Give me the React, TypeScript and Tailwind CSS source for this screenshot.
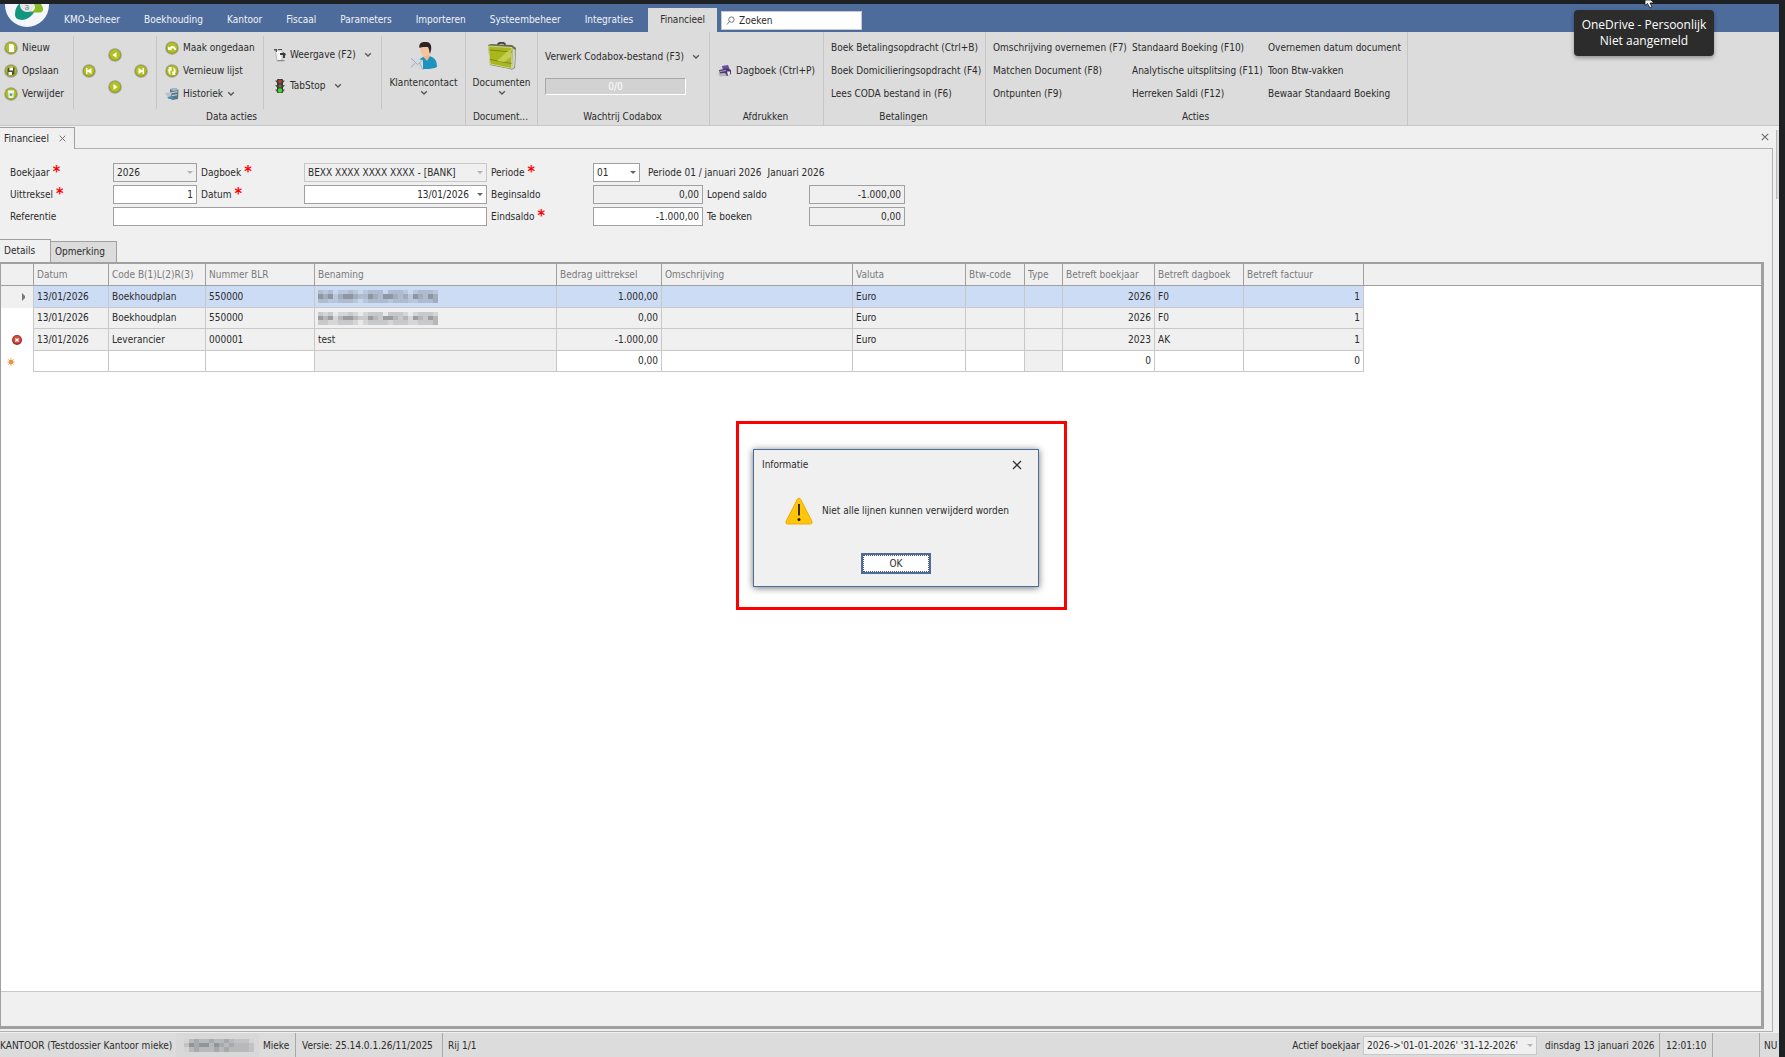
import { useState } from 'react';
import type { ReactNode } from 'react';
import clsx from 'clsx';

const MENU = [
  'KMO-beheer',
  'Boekhouding',
  'Kantoor',
  'Fiscaal',
  'Parameters',
  'Importeren',
  'Systeembeheer',
  'Integraties',
  'Financieel',
];

const ACTION_COLUMNS = [
  {
    width: 'w-[139px]',
    items: ['Omschrijving overnemen (F7)', 'Matchen Document (F8)', 'Ontpunten (F9)'],
  },
  {
    width: 'w-[136px]',
    items: ['Standaard Boeking (F10)', 'Analytische uitsplitsing (F11)', 'Herreken Saldi (F12)'],
  },
  {
    width: 'w-[136px]',
    items: ['Overnemen datum document', 'Toon Btw-vakken', 'Bewaar Standaard Boeking'],
  },
];

type Column = { title: string; width: string; right?: boolean };

const COLUMNS: Column[] = [
  { title: 'Datum', width: 'w-[75px]' },
  { title: 'Code B(1)L(2)R(3)', width: 'w-[97px]' },
  { title: 'Nummer BLR', width: 'w-[109px]' },
  { title: 'Benaming', width: 'w-[242px]' },
  { title: 'Bedrag uittreksel', width: 'w-[105px]', right: true },
  { title: 'Omschrijving', width: 'w-[191px]' },
  { title: 'Valuta', width: 'w-[113px]' },
  { title: 'Btw-code', width: 'w-[59px]' },
  { title: 'Type', width: 'w-[38px]' },
  { title: 'Betreft boekjaar', width: 'w-[92px]', right: true },
  { title: 'Betreft dagboek', width: 'w-[89px]' },
  { title: 'Betreft factuur', width: 'w-[120px]', right: true },
];

type Row = { state: 'current' | 'plain' | 'error' | 'new'; masked?: boolean; cells: string[] };

const ROWS: Row[] = [
  {
    state: 'current',
    masked: true,
    cells: ['13/01/2026', 'Boekhoudplan', '550000', '', '1.000,00', '', 'Euro', '', '', '2026', 'F0', '1'],
  },
  {
    state: 'plain',
    masked: true,
    cells: ['13/01/2026', 'Boekhoudplan', '550000', '', '0,00', '', 'Euro', '', '', '2026', 'F0', '1'],
  },
  {
    state: 'error',
    cells: ['13/01/2026', 'Leverancier', '000001', 'test', '-1.000,00', '', 'Euro', '', '', '2023', 'AK', '1'],
  },
  {
    state: 'new',
    cells: ['', '', '', '', '0,00', '', '', '', '', '0', '', '0'],
  },
];

/* ---------- icons ---------- */

function RoundIcon({ children }: { children: ReactNode }) {
  return (
    <svg viewBox="0 0 14 14" className="w-[14px] h-[14px] shrink-0" aria-hidden="true">
      <circle cx="7" cy="7" r="6.8" fill="#a3a39b" />
      <circle cx="7" cy="7" r="5.8" fill="#8f9c10" />
      <circle cx="7" cy="6.6" r="5.2" fill="#b3c01e" />
      {children}
    </svg>
  );
}

function Chevron() {
  return (
    <svg viewBox="0 0 8 6" className="w-2 h-[6px] shrink-0" fill="none" stroke="#555" strokeWidth="1.3" aria-hidden="true">
      <path d="M1.2 1.2 L4 4 L6.8 1.2" />
    </svg>
  );
}

function Cross({ className, color }: { className: string; color: string }) {
  return (
    <svg viewBox="0 0 10 10" className={className} stroke={color} strokeWidth="1.3" aria-hidden="true">
      <path d="M1 1 L9 9 M9 1 L1 9" />
    </svg>
  );
}

function Logo() {
  return (
    <svg viewBox="0 0 44 24" className="w-11 h-6" aria-hidden="true">
      <circle cx="22" cy="1" r="22" fill="#f4f6fb" />
      <path d="M10 10 C10 5 12 2 14 0 L16 0 C17 6 22 9 30 7 C26 14 20 17 14 15.500 C11 15 10 13 10 10 Z" fill="#12977f" />
      <path d="M24 8 C30 8 31 3 29 0 L36 0 C40 6 38 9 33 8.500 C30 8.300 28 9 24 8 Z" fill="#86bc25" />
      <circle cx="22" cy="1" r="7" fill="#e4e6ea" />
      <text x="22" y="6" textAnchor="middle" fontSize="8" fill="#7c8088">a</text>
    </svg>
  );
}

const NewIcon = () => (
  <RoundIcon>
    <path d="M5 3 h3.500 l1.500 1.500 v6.500 h-5 z" fill="#fff" />
  </RoundIcon>
);

const SaveIcon = () => (
  <RoundIcon>
    <path d="M3.500 4.500 L5 3.500 h5.500 v6 L9 11 h-5.500 z" fill="#4d4f3a" />
    <path d="M5.500 3.500 h3.500 v3 h-3.500 z M4.500 8 h3.500 v3 h-3.500 z" fill="#fff" />
  </RoundIcon>
);

const DeleteIcon = () => (
  <RoundIcon>
    <path d="M4 4 h6 l-.7 7 h-4.600 z" fill="#e9f1ee" />
    <path d="M4 3.500 h6 v1.200 h-6 z" fill="#fff" />
    <path d="M5.500 7 l1.500 -1 l1.500 1 l-.5 2 h-2 z" fill="#5fa79a" />
  </RoundIcon>
);

const UndoIcon = () => (
  <RoundIcon>
    <path d="M3 9 V5.500 L4.500 6.500 C6.500 4 10.500 4.300 11.300 9 H9.500 C9 7 7.200 7 6.200 8 L7 9 Z" fill="#fff" />
  </RoundIcon>
);

const RefreshIcon = () => (
  <RoundIcon>
    <path d="M6.500 3 L3.300 3.300 L4.200 4.300 C2.500 6.500 3.300 9.700 6 10.800 C4.900 8.900 5 7.200 5.900 6 L6.800 6.900 Z" fill="#fff" />
    <path d="M7.500 11 L10.700 10.700 L9.800 9.700 C11.500 7.500 10.700 4.300 8 3.200 C9.100 5.100 9 6.800 8.100 8 L7.200 7.100 Z" fill="#fff" />
  </RoundIcon>
);

const HistoryIcon = () => (
  <svg viewBox="0 0 14 14" className="w-[14px] h-[14px] shrink-0" aria-hidden="true">
    <path d="M5 2 L11 1 L13.500 3 L13 12 L7 13 L5 11 Z" fill="#5d7686" />
    <path d="M5 2 L11 1 L13.500 3 L8 4 Z" fill="#a9bcc6" />
    <path d="M7 5.500 L12.500 4.700 M7 8.500 L12 7.800" stroke="#cfdae0" />
    <path d="M0 6 L7 5 L6 10 L2 9 Z" fill="#b9c4ca" />
    <path d="M2 10 L8 9 L8 12 L4 12 Z" fill="#3d93b4" />
  </svg>
);

const ViewIcon = () => (
  <svg viewBox="0 0 12 14" className="w-3 h-[14px] shrink-0" aria-hidden="true">
    <path d="M1.500 2.500 L8 2 V12 L3 13 Z" fill="#f6f6f6" stroke="#a5a5a5" strokeWidth=".7" />
    <path d="M0 1 h3 v3 h-1 v-1.500 h-2 z M4 1 h4 v1 h-4 z" fill="#555" />
    <path d="M6 5 h3 v-1 l3 2 l-1 2 v2 h-2 v-3 h-3 z" fill="#3c3c3c" />
    <path d="M3 12 h7 l1 1.200 h-7 z" fill="#8a8a8a" />
  </svg>
);

const TrafficIcon = () => (
  <svg viewBox="0 0 12 16" className="w-3 h-4 shrink-0" aria-hidden="true">
    <path d="M1 2.500 H11 L9 5 H3 Z M1 7 H11 L9 9.500 H3 Z M1 11.500 H11 L9 14 H3 Z" fill="#555" />
    <rect x="3" y="1" width="6" height="14" rx="1" fill="#3a3a3a" />
    <circle cx="6" cy="3.500" r="1.900" fill="#b53a30" />
    <circle cx="6" cy="8" r="1.800" fill="#6f6a3a" />
    <circle cx="6" cy="12.500" r="2.200" fill="#35e026" />
  </svg>
);

const ContactIcon = () => (
  <svg viewBox="0 0 28 28" className="w-7 h-7" aria-hidden="true">
    <path d="M8 26 C7 18 10 15 17 14 C24 14 27 18 27 25 C22 27.500 13 27.500 8 26 Z" fill="#1d93bd" />
    <path d="M13 14.500 L17 19 L20 14 L18.500 12 H14 Z" fill="#f0b78e" />
    <ellipse cx="15.500" cy="8" rx="5" ry="6.500" fill="#f5c39c" />
    <path d="M9.500 6 C8.500 2 11 0 15 0 C20 -.5 22 3 21 8 L20 12 C19 10 19.500 7 18 5 C15 5 12 4.500 9.500 6 Z" fill="#2c2420" />
    <path d="M1 16 L13 18 V28 L1 25.500 Z" fill="#d4d9df" />
    <path d="M1 16 L7.500 22.500 L13 18 M1 25.500 L5.500 20.500 M13 28 L9.500 21" fill="none" stroke="#9fa6ae" strokeWidth=".8" />
  </svg>
);

const SuitcaseIcon = () => (
  <svg viewBox="0 0 30 28" className="w-[30px] h-7" aria-hidden="true">
    <path d="M11 3 C11 0 18 0 18 3" fill="none" stroke="#454545" strokeWidth="2" />
    <path d="M1 3 L4 2 L25 3 L29 6 L28 26 L25 27.500 L3 23 Z" fill="#6b6f45" />
    <path d="M1.500 4 L25 5.500 L24.500 26.500 L3 22 Z" fill="#a8b71c" stroke="#dfe3bd" strokeWidth=".8" />
    <path d="M2.500 8 L25 10 M3 17.500 L24.500 21.500" stroke="#7f8a1a" />
    <path d="M10 19 L22 8 L24 8.500 L24 15 L17 20 Z" fill="#cdd86a" opacity=".7" />
    <path d="M25.500 6 L28.500 8 L27.500 25.500 L25 27 Z" fill="#cfd3bd" />
  </svg>
);

const PrinterIcon = () => (
  <svg viewBox="0 0 14 12" className="w-[14px] h-3 shrink-0" aria-hidden="true">
    <path d="M4 1 L10 0 L12 5 L5 6 Z" fill="#6d4aa5" />
    <path d="M1 5 L9 3.500 L13 5 V9 L9 11 L2 9 Z" fill="#4a3c66" />
    <path d="M0 8.500 L7 8 L9 10.500 L2 11.500 Z" fill="#b9b4c4" />
    <path d="M9 6.500 h3 v3 l-2 1 z" fill="#ece9f2" />
    <path d="M2 6.500 L8 5.500" stroke="#c9bde0" strokeWidth=".8" />
  </svg>
);

const ErrorIcon = () => (
  <svg viewBox="0 0 10 10" className="w-[10px] h-[10px]" aria-label="Fout">
    <circle cx="5" cy="5" r="5" fill="#a02a22" />
    <circle cx="5" cy="4.600" r="4" fill="#cf4a3d" />
    <path d="M3.400 3.400 L6.600 6.600 M6.600 3.400 L3.400 6.600" stroke="#fff" strokeWidth="1.400" />
  </svg>
);

const NewRowIcon = () => (
  <svg viewBox="0 0 8 8" className="w-2 h-2" aria-hidden="true">
    <path d="M4 0 V8 M0 4 H8 M1.200 1.200 L6.800 6.800 M6.800 1.200 L1.200 6.800" stroke="#f5b678" strokeWidth="1" />
    <circle cx="4" cy="4" r="2.300" fill="#f0923c" />
  </svg>
);

const WarningIcon = () => (
  <svg viewBox="0 0 28 28" className="w-7 h-7 shrink-0" aria-hidden="true">
    <path d="M12.500 2 Q14 0 15.500 2 L27 24.500 Q27.500 27 25.500 27 H2.500 Q.5 27 1 24.500 Z" fill="#ffc60a" stroke="#efa80a" strokeLinejoin="round" />
    <path d="M14 7 V18.500" stroke="#1f1f1f" strokeWidth="1.800" />
    <circle cx="14" cy="22.500" r="1.500" fill="#1f1f1f" />
  </svg>
);

const MASK_TONES: Record<string, string> = {
  '0': 'opacity-5',
  '1': 'opacity-20',
  '2': 'opacity-30',
  '3': 'opacity-45',
  '4': 'opacity-65',
};

const MASK_NAME = ['212011210122202221012221', '434134432243244323143243', '221122210122221222112223'];
const MASK_STATUS = ['02322322321110', '14344243232221', '02322232322221'];

// Redacted value, drawn as coarse blocks
function Mask({ rows, className }: { rows: string[]; className: string }) {
  return (
    <span className={clsx('grid h-[13px]', className)}>
      {rows.map((row, y) => (
        <span key={y} className="flex">
          {row.split('').map((tone, x) => (
            <span key={x} className={clsx('flex-1 bg-[#6c7078]', MASK_TONES[tone])} />
          ))}
        </span>
      ))}
    </span>
  );
}

/* ---------- ribbon ---------- */

function RibbonGroup({ title, width, children }: { title: string; width: string; children: ReactNode }) {
  return (
    <section className={clsx('flex flex-col shrink-0 h-[93px] border-r border-[#c6c6c6]', width)}>
      <div className="flex flex-1">{children}</div>
      <h2 className="h-4 pr-[2px] leading-4 text-center">{title}</h2>
    </section>
  );
}

function RibbonButton({ icon, label, drop }: { icon?: ReactNode; label: string; drop?: 'near' | 'far' }) {
  return (
    <button className="flex items-center h-[23px] gap-1 whitespace-nowrap hover:bg-[#cdd5e3]">
      {icon}
      <span>{label}</span>
      {drop && (
        <span className={drop === 'far' ? 'pl-1' : ''}>
          <Chevron />
        </span>
      )}
    </button>
  );
}

function BigButton({ icon, label }: { icon: ReactNode; label: string }) {
  return (
    <button className="flex flex-1 flex-col items-center pt-[10px]">
      {icon}
      <span className="h-4 mt-1 leading-[18px]">{label}</span>
      <Chevron />
    </button>
  );
}

function NavButton({ label, d, className }: { label: string; d: string; className: string }) {
  return (
    <button aria-label={label} className={clsx('flex items-center justify-center', className)}>
      <RoundIcon>
        <path d={d} fill="#fff" />
      </RoundIcon>
    </button>
  );
}

function Ribbon() {
  return (
    <div className="flex h-[94px] bg-[#dcdcdc] border-b border-[#c8c8c8]">
      <RibbonGroup title="Data acties" width="w-[466px]">
        <div className="flex flex-col w-[74px] mt-1 pl-1 border-r border-[#c6c6c6]">
          <RibbonButton icon={<NewIcon />} label="Nieuw" />
          <RibbonButton icon={<SaveIcon />} label="Opslaan" />
          <RibbonButton icon={<DeleteIcon />} label="Verwijder" />
        </div>
        <div className="flex items-center justify-center w-[83px] mt-1 pb-1 border-r border-[#c6c6c6]">
          <div className="grid grid-cols-[26px_26px_26px] grid-rows-[16px_16px_16px]">
            <NavButton label="Vorige" className="col-start-2 row-start-1" d="M8.500 4 V10 L4.500 7 Z" />
            <NavButton label="Eerste" className="col-start-1 row-start-2" d="M4 4 H5.500 V6.500 L9.500 4 V10 L5.500 7.500 V10 H4 Z" />
            <NavButton label="Laatste" className="col-start-3 row-start-2" d="M10 4 H8.500 V6.500 L4.500 4 V10 L8.500 7.500 V10 H10 Z" />
            <NavButton label="Volgende" className="col-start-2 row-start-3" d="M5.500 4 V10 L9.500 7 Z" />
          </div>
        </div>
        <div className="flex flex-col w-[107px] mt-1 pl-2 border-r border-[#c6c6c6]">
          <RibbonButton icon={<UndoIcon />} label="Maak ongedaan" />
          <RibbonButton icon={<RefreshIcon />} label="Vernieuw lijst" />
          <RibbonButton icon={<HistoryIcon />} label="Historiek" drop="near" />
        </div>
        <div className="flex flex-col justify-center gap-2 w-[118px] mt-1 pb-1 pl-[10px] border-r border-[#c6c6c6]">
          <RibbonButton icon={<ViewIcon />} label="Weergave (F2)" drop="far" />
          <RibbonButton icon={<TrafficIcon />} label="TabStop" drop="far" />
        </div>
        <BigButton icon={<ContactIcon />} label="Klantencontact" />
      </RibbonGroup>

      <RibbonGroup title="Document..." width="w-[72px]">
        <BigButton icon={<SuitcaseIcon />} label="Documenten" />
      </RibbonGroup>

      <RibbonGroup title="Wachtrij Codabox" width="w-[172px]">
        <div className="flex flex-col gap-[10px] pt-[13px] pl-[7px]">
          <RibbonButton label="Verwerk Codabox-bestand (F3)" drop="far" />
          <div
            role="progressbar"
            aria-valuenow={0}
            aria-label="Wachtrij Codabox"
            className="w-[141px] h-[17px] leading-4 text-center text-white bg-[#d2d2d2] border border-t-[#a8a8a8] border-l-[#a8a8a8] border-b-white border-r-white"
          >
            0/0
          </div>
        </div>
      </RibbonGroup>

      <RibbonGroup title="Afdrukken" width="w-[114px]">
        <div className="flex items-center pl-2">
          <RibbonButton icon={<PrinterIcon />} label="Dagboek (Ctrl+P)" />
        </div>
      </RibbonGroup>

      <RibbonGroup title="Betalingen" width="w-[162px]">
        <div className="flex flex-col pt-1 pl-[7px]">
          <RibbonButton label="Boek Betalingsopdracht (Ctrl+B)" />
          <RibbonButton label="Boek Domicilieringsopdracht (F4)" />
          <RibbonButton label="Lees CODA bestand in (F6)" />
        </div>
      </RibbonGroup>

      <RibbonGroup title="Acties" width="w-[422px]">
        <div className="flex pt-1 pl-[7px]">
          {ACTION_COLUMNS.map((column, i) => (
            <div key={i} className={clsx('flex flex-col', column.width)}>
              {column.items.map((item) => (
                <RibbonButton key={item} label={item} />
              ))}
            </div>
          ))}
        </div>
      </RibbonGroup>
    </div>
  );
}

/* ---------- form ---------- */

function FieldLabel({ htmlFor, required, children }: { htmlFor: string; required?: boolean; children: ReactNode }) {
  return (
    <label htmlFor={htmlFor} className="flex items-center gap-[3px] h-[19px] whitespace-nowrap">
      {children}
      {required && <span className="h-[19px] text-[16px] leading-[18px] font-bold text-[#f00]">*</span>}
    </label>
  );
}

function TextField({ id, value, readOnly, right }: { id: string; value: string; readOnly?: boolean; right?: boolean }) {
  return (
    <input
      id={id}
      type="text"
      defaultValue={value}
      readOnly={readOnly}
      className={clsx(
        'block w-full h-[19px] px-[3px] border border-[#a0a0a0] outline-none',
        right && 'text-right',
        readOnly ? 'bg-[#f0f0f0]' : 'bg-white'
      )}
    />
  );
}

function SelectField({ id, value, disabled, faded, right }: { id: string; value: string; disabled?: boolean; faded?: boolean; right?: boolean }) {
  return (
    <div className="relative">
      <select
        id={id}
        defaultValue={value}
        disabled={disabled}
        className={clsx(
          'block w-full h-[19px] pl-[3px] leading-[14px] text-[#2b2b2b] border outline-none appearance-none opacity-100',
          right ? 'pr-[17px] [text-align-last:right]' : 'pr-3',
          disabled ? 'bg-[#f0f0f0]' : 'bg-white',
          faded ? 'border-[#c8c8c8]' : 'border-[#a0a0a0]'
        )}
      >
        <option>{value}</option>
      </select>
      <svg viewBox="0 0 6 3" className="absolute right-[4px] top-2 w-[6px] h-[3px] pointer-events-none" aria-hidden="true">
        <path d="M0 0 H6 L3 3 Z" fill={disabled ? '#b4b4b4' : '#666'} />
      </svg>
    </div>
  );
}

function StatementForm() {
  return (
    <form className="grid grid-cols-[103px_84px_107px_183px_106px_110px_106px_96px] gap-y-[3px] pl-[10px] pt-[14px]">
      <FieldLabel htmlFor="boekjaar" required>Boekjaar</FieldLabel>
      <SelectField id="boekjaar" value="2026" disabled />
      <div className="pl-1">
        <FieldLabel htmlFor="dagboek" required>Dagboek</FieldLabel>
      </div>
      <SelectField id="dagboek" value="BEXX XXXX XXXX XXXX - [BANK]" disabled faded />
      <div className="pl-1">
        <FieldLabel htmlFor="periode" required>Periode</FieldLabel>
      </div>
      <div className="flex items-center col-span-3 gap-[6px] whitespace-nowrap">
        <div className="w-[47px] mr-[2px]">
          <SelectField id="periode" value="01" />
        </div>
        <span>Periode 01 / januari 2026</span>
        <span>Januari 2026</span>
      </div>

      <FieldLabel htmlFor="uittreksel" required>Uittreksel</FieldLabel>
      <TextField id="uittreksel" value="1" right />
      <div className="pl-1">
        <FieldLabel htmlFor="datum" required>Datum</FieldLabel>
      </div>
      <SelectField id="datum" value="13/01/2026" right />
      <div className="pl-1">
        <FieldLabel htmlFor="beginsaldo">Beginsaldo</FieldLabel>
      </div>
      <TextField id="beginsaldo" value="0,00" readOnly right />
      <div className="pl-1">
        <FieldLabel htmlFor="lopend">Lopend saldo</FieldLabel>
      </div>
      <TextField id="lopend" value="-1.000,00" readOnly right />

      <FieldLabel htmlFor="referentie">Referentie</FieldLabel>
      <div className="col-span-3">
        <TextField id="referentie" value="" />
      </div>
      <div className="pl-1">
        <FieldLabel htmlFor="eindsaldo" required>Eindsaldo</FieldLabel>
      </div>
      <TextField id="eindsaldo" value="-1.000,00" right />
      <div className="pl-1">
        <FieldLabel htmlFor="teboeken">Te boeken</FieldLabel>
      </div>
      <TextField id="teboeken" value="0,00" readOnly right />
    </form>
  );
}

/* ---------- grid ---------- */

function RowMarker({ state }: { state: Row['state'] }) {
  if (state === 'current') {
    return (
      <svg viewBox="0 0 3 8" className="w-[3px] h-2 ml-[21px]" aria-hidden="true">
        <path d="M0 0 L3 3 V5 L0 8 Z" fill="#777" />
      </svg>
    );
  }
  if (state === 'error') return <span className="block ml-[11px]"><ErrorIcon /></span>;
  if (state === 'new') return <span className="block ml-[6px]"><NewRowIcon /></span>;
  return null;
}

function cellBackground(state: Row['state'], column: number) {
  if (state === 'current') return 'bg-[#cddcf5]';
  if (state !== 'new') return 'bg-[#f0f0f0]';
  return column === 3 || column === 8 ? 'bg-[#f0f0f0]' : 'bg-white';
}

function DetailGrid() {
  return (
    <table className="w-full table-fixed border-separate border-spacing-0">
      <thead>
        <tr className="h-[22px] text-left text-[#7a7a7a]">
          <th className="w-[33px] bg-[#f0f0f0] border-r border-b border-[#a0a0a0]" aria-label="Status" />
          {COLUMNS.map((column) => (
            <th
              key={column.title}
              className={clsx('px-[3px] bg-[#f0f0f0] font-normal whitespace-nowrap border-r border-b border-[#a0a0a0]', column.width)}
            >
              {column.title}
            </th>
          ))}
          <th className="bg-[#f0f0f0] border-b border-[#a0a0a0]" aria-hidden="true" />
        </tr>
      </thead>
      <tbody>
        {ROWS.map((row, i) => (
          <tr key={i} className="h-[22px] even:h-[21px]">
            <td className={clsx('border-r border-[#c8c8c8]', row.state === 'current' ? 'bg-[#f0f0f0]' : 'bg-white')}>
              <RowMarker state={row.state} />
            </td>
            {row.cells.map((cell, c) => (
              <td
                key={c}
                className={clsx(
                  'px-[3px] whitespace-nowrap border-r border-b border-[#c8c8c8]',
                  COLUMNS[c].right && 'text-right',
                  cellBackground(row.state, c)
                )}
              >
                {row.masked && c === 3 ? <Mask rows={MASK_NAME} className="w-[120px]" /> : cell}
              </td>
            ))}
            <td />
          </tr>
        ))}
      </tbody>
    </table>
  );
}

/* ---------- overlays ---------- */

function InfoDialog({ onClose }: { onClose: () => void }) {
  return (
    <div className="absolute left-[736px] top-[421px] w-[331px] h-[189px] border-3 border-[#f00] pt-[25px] pl-[14px]">
      <div
        role="alertdialog"
        aria-labelledby="dialog-title"
        className="flex flex-col w-[286px] h-[138px] bg-[#f0f0f0] border border-[#4d6b9b] shadow-[0_1px_7px_rgba(0,0,0,0.55)]"
      >
        <div className="flex items-center justify-between h-[29px] pl-2 pr-4">
          <h2 id="dialog-title">Informatie</h2>
          <button aria-label="Sluiten" onClick={onClose}>
            <Cross className="w-[10px] h-[10px]" color="#333" />
          </button>
        </div>
        <div className="flex items-center gap-[9px] h-16 pl-[31px]">
          <WarningIcon />
          <p className="whitespace-nowrap">Niet alle lijnen kunnen verwijderd worden</p>
        </div>
        <div className="flex justify-center pt-[10px]">
          <button onClick={onClose} className="w-[70px] h-[21px] bg-white border-2 border-[#4d6b9b]">
            <span className="block h-[17px] leading-[15px] border border-dotted border-[#555]">OK</span>
          </button>
        </div>
      </div>
    </div>
  );
}

function TrayTooltip() {
  return (
    <div
      role="tooltip"
      className="absolute right-[71px] top-[10px] flex flex-col items-center justify-center w-[140px] h-[46px] rounded bg-[#2c2c2c] text-[12px] leading-4 text-white whitespace-nowrap shadow-[0_2px_4px_rgba(0,0,0,0.35)] font-['Open_Sans','Noto_Sans',sans-serif]"
    >
      <span>OneDrive - Persoonlijk</span>
      <span>Niet aangemeld</span>
    </div>
  );
}

function MousePointer() {
  return (
    <svg viewBox="0 0 12 9" className="absolute right-[129px] top-0 w-3 h-[9px]" aria-hidden="true">
      <path d="M1 0 V5.500 L3.500 3.500 L6 8 L8 7 L6 3 H10 L7 0 Z" fill="#fff" stroke="#111" strokeWidth=".8" />
    </svg>
  );
}

function StatusBar() {
  return (
    <footer className="flex items-stretch h-6 bg-[#dcdcdc] leading-[26px] whitespace-nowrap overflow-hidden">
      <span className="w-[176px]">KANTOOR (Testdossier Kantoor mieke)</span>
      <span className="flex items-center w-[83px] pl-2 bg-[#d8d8d8]">
        <Mask rows={MASK_STATUS} className="w-[70px]" />
      </span>
      <span className="w-[37px] pl-1 border-r border-[#a8a8a8]">Mieke</span>
      <span className="w-[147px] pl-[6px] border-r border-[#a8a8a8]">Versie: 25.14.0.1.26/11/2025</span>
      <span className="pl-[5px]">Rij 1/1</span>
      <label htmlFor="actief" className="ml-auto pr-[3px]">Actief boekjaar</label>
      <div className="w-[174px] pt-[3px]">
        <SelectField id="actief" value="2026->'01-01-2026' '31-12-2026'" disabled faded />
      </div>
      <span className="w-[123px] pl-2 border-r border-[#a8a8a8]">dinsdag 13 januari 2026</span>
      <span className="w-[53px] pl-[6px] border-r border-[#a8a8a8]">12:01:10</span>
      <span className="w-[47px] border-r border-[#a8a8a8]" />
      <span className="w-[19px] pl-1">NU</span>
    </footer>
  );
}

export default function App() {
  const [dialogOpen, setDialogOpen] = useState(true);
  const [tab, setTab] = useState('Details');

  return (
    <div className="relative flex flex-col min-h-screen pt-1 pr-[6px] overflow-hidden bg-[#1d2123] text-[10px] leading-[14px] text-[#2b2b2b] font-['DejaVu_Sans_Condensed','Noto_Sans',sans-serif]">
      <header className="flex h-7 bg-[#4d6b9b]">
        <div className="w-[52px] pl-[5px]">
          <Logo />
        </div>
        <nav className="flex items-end">
          {MENU.map((item) => (
            <button
              key={item}
              className={clsx(
                'h-6 px-3 whitespace-nowrap',
                item === 'Financieel' ? 'ml-[3px] bg-[#dcdcdc]' : 'text-[#f2f4f8]'
              )}
            >
              {item}
            </button>
          ))}
        </nav>
        <label className="flex items-center gap-1 w-[141px] h-[19px] mt-[7px] ml-1 pl-1 bg-white border border-[#c8c8c8]">
          <svg viewBox="0 0 10 10" className="w-[9px] h-[9px] shrink-0" fill="none" stroke="#666" aria-hidden="true">
            <circle cx="6" cy="4" r="3" />
            <path d="M4 6 L1 9.500" />
          </svg>
          <input
            type="search"
            aria-label="Zoeken"
            placeholder="Zoeken"
            className="w-full outline-none placeholder:text-[#2b2b2b]"
          />
        </label>
      </header>

      <Ribbon />

      <main className="flex flex-col flex-1 bg-[#f0f0f0]">
        <div className="flex h-[23px] mr-[6px]">
          <div className="flex items-center w-[75px] mt-px pl-1 border-t border-r border-[#a0a0a0]">
            <span>Financieel</span>
            <button aria-label="Tabblad sluiten" className="ml-auto mr-2">
              <Cross className="w-[7px] h-[7px]" color="#666" />
            </button>
          </div>
          <div className="flex items-center justify-end flex-1 pr-1 border-b border-[#b0b0b0]">
            <button aria-label="Alles sluiten">
              <Cross className="w-2 h-2" color="#666" />
            </button>
          </div>
        </div>

        <div className="flex flex-col flex-1 mr-[6px] pr-2 pb-[2px] border-r border-b border-[#b0b0b0]">
          <StatementForm />

          <div className="flex items-end pt-[13px]">
            {['Details', 'Opmerking'].map((name) => (
              <button
                key={name}
                onClick={() => setTab(name)}
                className={clsx(
                  'pl-1 text-left border-t border-r border-[#a0a0a0]',
                  name === 'Details' ? 'w-[51px]' : 'w-[66px]',
                  tab === name ? 'h-[23px]' : 'h-[21px] bg-[#dcdcdc]'
                )}
              >
                {name}
              </button>
            ))}
          </div>

          <div className="flex flex-col flex-1 bg-white border-t-2 border-r-3 border-b-3 border-l border-[#a0a0a0]">
            <DetailGrid />
            <div className="mt-auto h-[35px] bg-[#f0f0f0] border-t border-[#c8c8c8]" />
          </div>
        </div>
        <div className="h-px" />
      </main>

      <StatusBar />

      <div className="absolute right-[6px] top-[130px] w-[3px] h-[69px] bg-[#dcdcdc] border-l border-[#b8b8b8]" />
      {dialogOpen && <InfoDialog onClose={() => setDialogOpen(false)} />}
      <TrayTooltip />
      <MousePointer />
    </div>
  );
}
